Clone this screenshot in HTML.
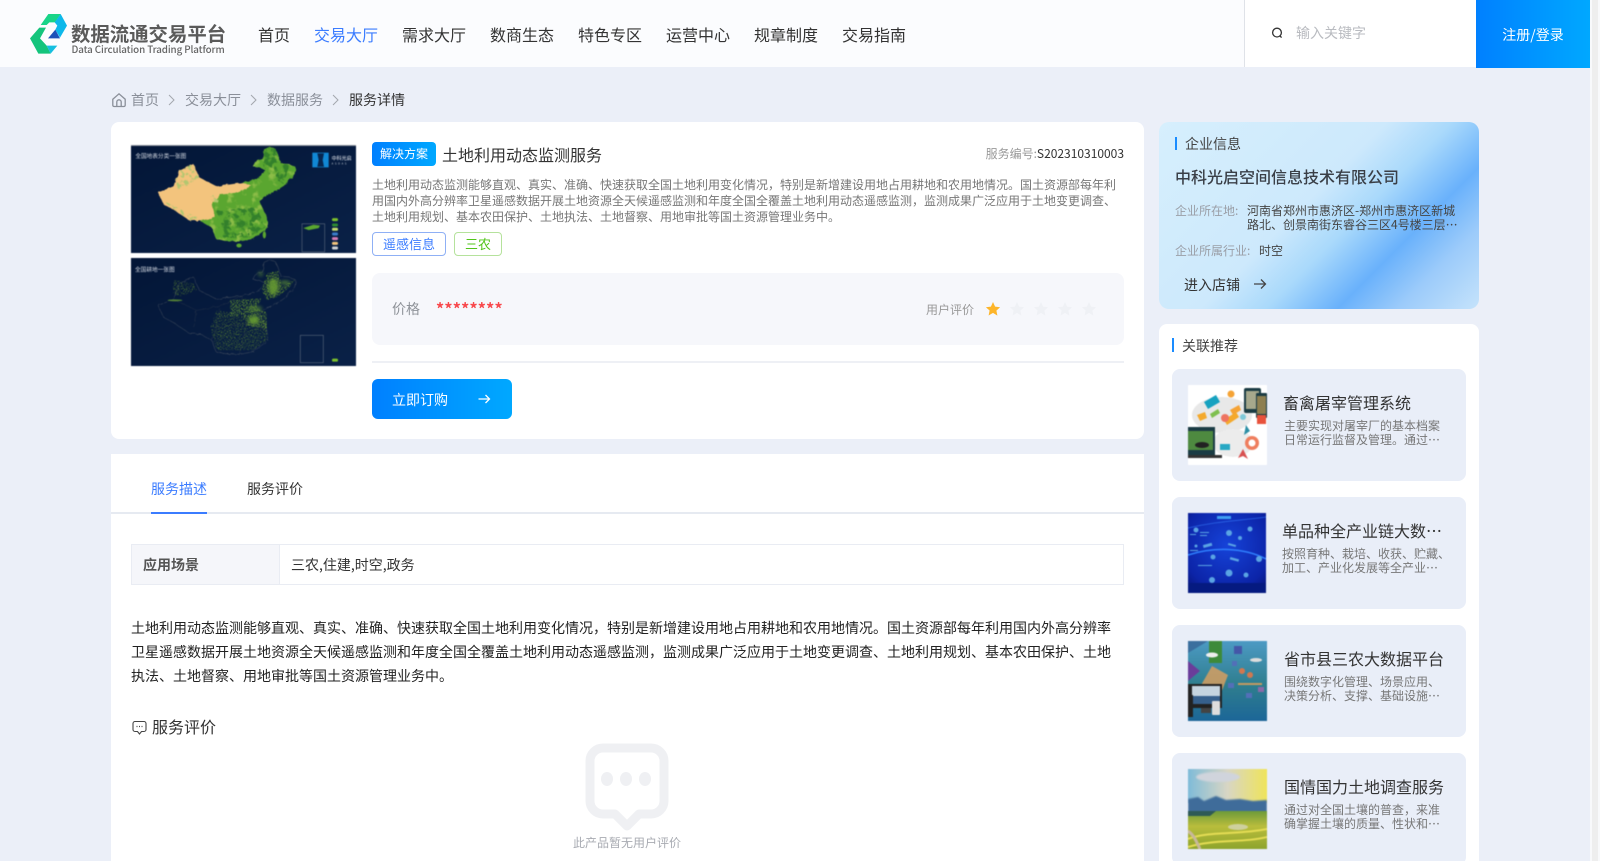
<!DOCTYPE html>
<html lang="zh"><head><meta charset="utf-8"><title>服务详情</title>
<style>
*{margin:0;padding:0;box-sizing:border-box}
html,body{width:1600px;height:861px;overflow:hidden}
body{position:relative;background:#ebeff8;font-family:"Noto Sans CJK SC","Liberation Sans",sans-serif;color:#333}
.a{position:absolute}
.t{position:absolute;white-space:nowrap;line-height:20px}
.nav{font-size:16px;color:#333;top:24px}
.bc{font-size:14px;color:#8a8f99;top:90px}
.d{font-size:12px;color:#777;left:372px;line-height:16px}
.p{font-size:14px;color:#222;left:131px;line-height:24px}
.item{position:absolute;left:1172px;width:294px;height:112px;background:#e9eef8;border-radius:8px}
.tt{font-size:16px;color:#333}
.ds{font-size:12px;color:#777;line-height:14px}
.th{filter:blur(.4px);overflow:hidden}
filter,filter *{color-interpolation-filters:sRGB}
</style></head><body>

<!-- header -->
<div class="a" style="left:0;top:0;width:1590px;height:67px;background:#fbfcfe"></div>
<svg class="a" style="left:20px;top:5px" width="60" height="60" viewBox="0 0 180 180">
<polygon points="62,60 85,27 122,27 105,52 88,52 80,60" fill="#18d488"/>
<polygon points="122,27 141,62 120,98 106,74 112,62 104,52" fill="#0db8ea"/>
<polygon points="106,74 120,100 84,100" fill="#1d51b8"/>
<polygon points="30,100 58,68 78,68 60,100 80,122 92,146 55,146" fill="#14c47c"/>
<polygon points="80,122 112,122 92,146" fill="#15bfe0"/>
</svg>
<div class="t" style="left:71px;top:21px;font-size:19.4px;font-weight:700;color:#5a5a5a;line-height:24px">数据流通交易平台</div>
<div class="t" style="left:71.500px;top:41px;font-size:9.8px;font-weight:500;color:#666;letter-spacing:-.1px;line-height:16px">Data Circulation Trading Platform</div>
<div class="t nav" style="left:258px">首页</div>
<div class="t nav" style="left:314px;color:#3b7cff">交易大厅</div>
<div class="t nav" style="left:402px">需求大厅</div>
<div class="t nav" style="left:490px">数商生态</div>
<div class="t nav" style="left:578px">特色专区</div>
<div class="t nav" style="left:666px">运营中心</div>
<div class="t nav" style="left:754px">规章制度</div>
<div class="t nav" style="left:842px">交易指南</div>
<div class="a" style="left:1244px;top:0;width:232px;height:67px;background:#fff;border-left:1px solid #dfe2e8"></div>
<svg class="a" style="left:1270px;top:26px" width="14" height="14" viewBox="0 0 14 14" fill="none" stroke="#333" stroke-width="1.3"><circle cx="7" cy="6.6" r="4.4"/><path d="M10 10l1.6 1.6"/></svg>
<div class="t" style="left:1296px;top:23px;font-size:14px;color:#b9bbc0">输入关键字</div>
<div class="a" style="left:1476px;top:0;width:114px;height:68px;background:linear-gradient(90deg,#0080ff,#00a8ff)"></div>
<div class="t" style="left:1476px;width:114px;text-align:center;top:25px;font-size:14px;color:#fff">注册/登录</div>
<div class="a" style="left:1590px;top:0;width:10px;height:861px;background:#f8f9fb"></div>
<div class="a" style="left:1592px;top:0;width:6px;height:861px;background:#eeeeee"></div>

<!-- breadcrumb -->
<svg class="a" style="left:111px;top:92px" width="16" height="16" viewBox="0 0 16 16" fill="none" stroke="#8a8f99" stroke-width="1.3"><path d="M1.800 7.200L8 1.800l6.200 5.400v6a1.300 1.300 0 0 1-1.300 1.300H3.100a1.300 1.300 0 0 1-1.300-1.300z"/><path d="M5.800 14.300V10a2.200 2.200 0 0 1 4.400 0v4.300"/></svg>
<div class="t bc" style="left:131px">首页</div>
<svg class="a" style="left:167px;top:93px" width="9" height="14" viewBox="0 0 9 14" fill="none" stroke="#a3a7ae" stroke-width="1"><path d="M2 2l5 5-5 5"/></svg>
<div class="t bc" style="left:185px">交易大厅</div>
<svg class="a" style="left:249px;top:93px" width="9" height="14" viewBox="0 0 9 14" fill="none" stroke="#a3a7ae" stroke-width="1"><path d="M2 2l5 5-5 5"/></svg>
<div class="t bc" style="left:267px">数据服务</div>
<svg class="a" style="left:331px;top:93px" width="9" height="14" viewBox="0 0 9 14" fill="none" stroke="#a3a7ae" stroke-width="1"><path d="M2 2l5 5-5 5"/></svg>
<div class="t bc" style="left:349px;color:#333">服务详情</div>

<!-- main card -->
<div class="a" style="left:111px;top:122px;width:1033px;height:317px;background:#fff;border-radius:8px"></div>
<svg class="a th" style="left:131px;top:144.500px" width="225" height="108.500" viewBox="63 73 675 325" preserveAspectRatio="none">
<defs>
<filter id="rough" x="-5%" y="-5%" width="110%" height="110%"><feTurbulence type="fractalNoise" baseFrequency=".07" numOctaves="3" seed="4"/><feDisplacementMap in="SourceGraphic" scale="8"/></filter>
<filter id="tex" x="0" y="0" width="100%" height="100%"><feTurbulence type="fractalNoise" baseFrequency=".04" numOctaves="4" seed="3" result="n"/><feColorMatrix in="n" type="matrix" values="0 0 0 0 .55  0 0 0 0 .74  0 0 0 0 .28  0 0 0 5 -2.700" result="sp"/><feComposite in="sp" in2="SourceAlpha" operator="in" result="c"/><feMerge><feMergeNode in="SourceGraphic"/><feMergeNode in="c"/></feMerge></filter>
<filter id="tex2" x="0" y="0" width="100%" height="100%"><feTurbulence type="fractalNoise" baseFrequency=".05" numOctaves="4" seed="9" result="n"/><feColorMatrix in="n" type="matrix" values="0 0 0 0 .2  0 0 0 0 .5  0 0 0 0 .17  0 0 0 7 -3.200" result="sp"/><feComposite in="sp" in2="SourceAlpha" operator="in"/></filter>
<filter id="tex3" x="0" y="0" width="100%" height="100%"><feTurbulence type="fractalNoise" baseFrequency=".09" numOctaves="3" seed="6" result="n"/><feColorMatrix in="n" type="matrix" values="0 0 0 0 .7  0 0 0 0 .78  0 0 0 0 .44  0 0 0 8 -4.100" result="sp"/><feComposite in="sp" in2="SourceAlpha" operator="in"/></filter>
<filter id="speck" x="0" y="0" width="100%" height="100%"><feTurbulence type="fractalNoise" baseFrequency=".3" numOctaves="2" seed="5" result="n"/><feColorMatrix in="n" type="matrix" values="0 0 0 0 .42  0 0 0 0 .62  0 0 0 0 .18  0 0 0 8 -4.100" result="sp"/><feComposite in="sp" in2="SourceAlpha" operator="in"/></filter>
<filter id="speck2" x="0" y="0" width="100%" height="100%"><feTurbulence type="fractalNoise" baseFrequency=".35" numOctaves="2" seed="8" result="n"/><feColorMatrix in="n" type="matrix" values="0 0 0 0 .34  0 0 0 0 .5  0 0 0 0 .18  0 0 0 10 -5.700" result="sp"/><feComposite in="sp" in2="SourceAlpha" operator="in"/></filter>
<filter id="b5"><feGaussianBlur stdDeviation="5"/></filter>
<linearGradient id="sea" x1="0" y1="0" x2="1" y2="1"><stop offset="0" stop-color="#031637"/><stop offset="1" stop-color="#0a2147"/></linearGradient></defs>
<rect x="63" y="73" width="675" height="325" fill="url(#sea)"/>
<rect x="63" y="73" width="675" height="3" fill="#8a8f99"/>
<g filter="url(#rough)">
<path filter="url(#tex)" fill="#5aa630" d="M395 186L440 175L468 150L452 142L430 138L440 120L458 115L462 86L480 78L498 86L512 128L537 130L558 140L554 160L522 195L490 215L470 222L447 240L472 290L474 320L452 337L430 354L390 362L345 360L318 354L305 320L270 300L300 260L310 225L350 215z"/>
<path filter="url(#tex2)" fill="#000" d="M462 86L480 78L498 86L512 128L540 135L520 190L480 165L460 140zM320 270L440 260L465 320L420 350L330 350z"/>
<path fill="#f3c47d" d="M145 215L190 197L208 150L250 130L268 170L320 197L395 186L425 195L385 215L330 222L305 250L315 290L280 298L240 300L198 272L160 250z"/>
<path filter="url(#tex3)" fill="#000" d="M190 197L208 150L250 130L268 170L240 190L200 205zM160 240L220 270L280 298L240 300L198 272zM300 230L330 220L320 260z"/>
</g>
<ellipse cx="387" cy="374" rx="8" ry="6" fill="#5aa630"/><ellipse cx="463" cy="342" rx="5" ry="11" fill="#5aa630"/>
<rect x="576" y="309" width="68" height="84" fill="none" stroke="#6a7686" stroke-width="1.500"/><path d="M580 322l30-10 20 2-4 8-30 6z" fill="#5aa630"/>
<g><rect x="666" y="292" width="18" height="9" rx="4" fill="#7cc02c"/><rect x="666" y="308" width="18" height="9" rx="4" fill="#2d8a32"/><rect x="666" y="321" width="18" height="9" rx="4" fill="#c6de6c"/><rect x="666" y="335" width="18" height="9" rx="4" fill="#3a7cc8"/><rect x="666" y="349" width="18" height="9" rx="4" fill="#d57cb4"/><rect x="666" y="363" width="18" height="9" rx="4" fill="#f3c47d"/><rect x="666" y="377" width="18" height="9" rx="4" fill="#cfd2d5"/></g>
<text x="76" y="112" font-size="17" fill="#d8dde6" font-family="Noto Sans CJK SC">全国地表分类一张图</text>
<rect x="607" y="96" width="49" height="44" fill="#1188d4"/><path d="M622 98h20l-4 20 4 20h-20l4-20z" fill="#07264f"/>
<text x="665" y="118" font-size="15" fill="#e8ecf2" font-family="Noto Sans CJK SC">中科光启</text>
<text x="665" y="132" font-size="8" fill="#c8d0d8" letter-spacing="5">ASDAS</text>
</svg>
<svg class="a th" style="left:131px;top:258px" width="225" height="108" viewBox="63 414 675 324" preserveAspectRatio="none">
<rect x="63" y="414" width="675" height="324" fill="url(#sea)"/>
<g filter="url(#rough)" transform="translate(0 341)">
<path fill="none" stroke="#4d5663" stroke-width="1.300" d="M145 215L190 197L208 150L250 130L268 170L320 197L395 186L440 175L468 150L452 142L430 138L440 120L458 115L462 86L480 78L498 86L512 128L537 130L558 140L554 160L522 195L490 215L470 222L447 240L472 290L474 320L452 337L430 354L390 362L345 360L318 354L305 320L270 300L240 300L198 272L160 250z"/>
<path fill="none" stroke="#2f3a4c" stroke-width="1" d="M190 197L260 230L250 280M260 230L330 218L395 186M330 218L320 280L305 320M320 280L410 270L470 290M395 186L410 270L390 360"/>
</g>
<g filter="url(#b5)" fill="#6fa832"><ellipse cx="490" cy="500" rx="16" ry="26" opacity=".8"/><ellipse cx="525" cy="488" rx="16" ry="6" opacity=".6"/><ellipse cx="432" cy="600" rx="16" ry="14" opacity=".85"/><ellipse cx="435" cy="566" rx="22" ry="9" opacity=".5"/><ellipse cx="452" cy="462" rx="8" ry="8" opacity=".4"/></g>
<ellipse cx="195" cy="541" rx="22" ry="3" fill="#6fa832" opacity=".7"/>
<path filter="url(#speck)" d="M470 460L505 452L515 500L555 478L540 500L505 530L470 540L455 510zM420 560L470 575L470 625L415 618L400 585zM360 540L455 535L430 580L360 590z" fill="#000"/>
<path filter="url(#speck2)" d="M320 570L470 600L472 660L430 690L320 690L300 620zM190 480L250 490L260 510L210 530L190 520z" fill="#000"/>
<rect x="571" y="646" width="69" height="82" fill="none" stroke="#6a7686" stroke-width="1.500"/>
<rect x="666" y="716" width="18" height="9" rx="4" fill="#7cc02c"/>
<text x="75" y="454" font-size="17" fill="#d8dde6" font-family="Noto Sans CJK SC">全国耕地一张图</text>
</svg>

<div class="a" style="left:372px;top:142px;width:64px;height:24px;border-radius:4px;background:linear-gradient(90deg,#0080ff,#00a8ff);color:#fff;font-size:12px;line-height:24px;text-align:center">解决方案</div>
<div class="t" style="left:442px;top:144px;font-size:16px;color:#333">土地利用动态监测服务</div>
<div class="t" style="right:476px;top:144px;font-size:12px;color:#999">服务编号:<span style="color:#333">S202310310003</span></div>
<div class="t d" style="top:177px">土地利用动态监测能够直观、真实、准确、快速获取全国土地利用变化情况，特别是新增建设用地占用耕地和农用地情况。国土资源部每年利</div>
<div class="t d" style="top:193px">用国内外高分辨率卫星遥感数据开展土地资源全天候遥感监测和年度全国全覆盖土地利用动态遥感监测，监测成果广泛应用于土地变更调查、</div>
<div class="t d" style="top:209px">土地利用规划、基本农田保护、土地执法、土地督察、用地审批等国土资源管理业务中。</div>
<div class="a" style="left:372px;top:232px;width:74px;height:24px;border:1px solid #8fb0f5;border-radius:4px;color:#3b7cff;font-size:13px;line-height:22px;text-align:center">遥感信息</div>
<div class="a" style="left:454px;top:232px;width:48px;height:24px;border:1px solid #b5e29c;border-radius:4px;color:#52c41a;font-size:13px;line-height:22px;text-align:center">三农</div>
<div class="a" style="left:372px;top:273px;width:752px;height:72px;background:#f6f7fb;border-radius:8px"></div>
<div class="t" style="left:392px;top:299px;font-size:14px;color:#8f9399">价格</div>
<div class="t" style="left:436px;top:298px;font-size:16px;font-weight:700;color:#f8484c;line-height:20px;letter-spacing:.25px">********</div>
<div class="t" style="left:926px;top:300px;font-size:12px;color:#999">用户评价</div>
<svg class="a" style="left:985px;top:301px" width="120" height="16" viewBox="0 0 120 16">
<defs><path id="s" d="M8 1l2.100 4.600 5 .6-3.700 3.400 1 5L8 11.900 3.600 14.500l1-5L.9 6.200l5-.6z"/></defs>
<use href="#s" fill="#fdb52a"/><use href="#s" x="24" fill="#eff1f5"/><use href="#s" x="48" fill="#eff1f5"/><use href="#s" x="72" fill="#eff1f5"/><use href="#s" x="96" fill="#eff1f5"/></svg>
<div class="a" style="left:372px;top:361px;width:752px;height:2px;background:#eef0f5"></div>
<div class="a" style="left:372px;top:379px;width:140px;height:40px;border-radius:6px;background:linear-gradient(90deg,#0080ff,#00a8ff)"></div>
<div class="t" style="left:392px;top:390px;font-size:14px;color:#fff">立即订购</div>
<svg class="a" style="left:477px;top:392px" width="14" height="14" viewBox="0 0 14 14" fill="none" stroke="#fff" stroke-width="1.300"><path d="M1.500 7h11M8.500 3l4 4-4 4"/></svg>

<!-- tabs card -->
<div class="a" style="left:111px;top:454px;width:1033px;height:407px;background:#fff"></div>
<div class="a" style="left:111px;top:512px;width:1033px;height:2px;background:#e6eaf1"></div>
<div class="a" style="left:151px;top:512px;width:56px;height:2px;background:#3b7cff"></div>
<div class="t" style="left:151px;top:479px;font-size:14px;color:#3b7cff">服务描述</div>
<div class="t" style="left:247px;top:479px;font-size:14px;color:#333">服务评价</div>
<div class="a" style="left:131px;top:544px;width:993px;height:41px;border:1px solid #e9ecf3"></div>
<div class="a" style="left:131px;top:544px;width:149px;height:41px;background:#f5f6fa;border:1px solid #e9ecf3"></div>
<div class="t" style="left:143px;top:555px;font-size:14px;font-weight:700;color:#555">应用场景</div>
<div class="t" style="left:291px;top:555px;font-size:14px;color:#333">三农,住建,时空,政务</div>
<div class="t p" style="top:616px">土地利用动态监测能够直观、真实、准确、快速获取全国土地利用变化情况，特别是新增建设用地占用耕地和农用地情况。国土资源部每年利用国内外高分辨率</div>
<div class="t p" style="top:640px">卫星遥感数据开展土地资源全天候遥感监测和年度全国全覆盖土地利用动态遥感监测，监测成果广泛应用于土地变更调查、土地利用规划、基本农田保护、土地</div>
<div class="t p" style="top:664px">执法、土地督察、用地审批等国土资源管理业务中。</div>
<svg class="a" style="left:132px;top:720px" width="15" height="16" viewBox="0 0 15 16" fill="none" stroke="#444" stroke-width="1.100"><path d="M3 1.500h9a2 2 0 0 1 2 2v6a2 2 0 0 1-2 2h-2.500L7.500 14l-2-2.500H3a2 2 0 0 1-2-2v-6a2 2 0 0 1 2-2z"/><path d="M4.500 6.500h1M7 6.500h1M9.500 6.500h1" stroke-width="1.300"/></svg>
<div class="t" style="left:152px;top:716px;font-size:16px;color:#333">服务评价</div>
<svg class="a" style="left:585px;top:743px" width="84" height="88" viewBox="0 0 84 88">
<path d="M18 5h48a13 13 0 0 1 13 13v40a13 13 0 0 1-13 13H54L42 83 30 71H18A13 13 0 0 1 5 58V18A13 13 0 0 1 18 5z" fill="none" stroke="#eff0f3" stroke-width="9" stroke-linejoin="round"/>
<ellipse cx="22" cy="36" rx="6" ry="7" fill="#eff0f3"/><ellipse cx="41" cy="36" rx="6" ry="7" fill="#eff0f3"/><ellipse cx="60" cy="36" rx="6" ry="7" fill="#eff0f3"/></svg>
<div class="t" style="left:573px;top:833px;font-size:12px;color:#a8abb2">此产品暂无用户评价</div>

<!-- company card -->
<div class="a" style="left:1159px;top:122px;width:320px;height:187px;border-radius:10px;background:linear-gradient(135deg,#d6effd 0%,#cde9fc 45%,#a9d9fb 58%,#69b1fb 72%,#9ccbfa 84%,#c5e3fb 100%)"></div>
<div class="a" style="left:1175px;top:137px;width:2px;height:13px;background:#1a8cff"></div>
<div class="t" style="left:1185px;top:134px;font-size:14px;color:#444">企业信息</div>
<div class="t" style="left:1175px;top:165px;font-size:16px;font-weight:500;color:#3a3f47;line-height:22px">中科光启空间信息技术有限公司</div>
<div class="t" style="left:1175px;top:201px;font-size:12px;color:#9a9ea6">企业所在地:</div>
<div class="t" style="left:1247px;top:204px;font-size:12px;color:#444;line-height:14px">河南省郑州市惠济区-郑州市惠济区新城<br>路北、创景南街东睿谷三区4号楼三层…</div>
<div class="t" style="left:1175px;top:241px;font-size:12px;color:#9a9ea6">企业所属行业:</div>
<div class="t" style="left:1259px;top:241px;font-size:12px;color:#444">时空</div>
<div class="t" style="left:1184px;top:275px;font-size:14px;color:#333">进入店铺</div>
<svg class="a" style="left:1253px;top:277px" width="14" height="14" viewBox="0 0 14 14" fill="none" stroke="#444" stroke-width="1.300"><path d="M1 7h11.500M8 2.500L12.500 7 8 11.500"/></svg>

<!-- related -->
<div class="a" style="left:1159px;top:324px;width:320px;height:537px;background:#fff;border-radius:8px 8px 0 0"></div>
<div class="a" style="left:1172px;top:338px;width:2px;height:14px;background:#1a8cff"></div>
<div class="t" style="left:1182px;top:336px;font-size:14px;color:#444">关联推荐</div>

<div class="item" style="top:369px"></div>
<svg class="a th" style="left:1188px;top:385px" width="79" height="80" viewBox="0 0 79 80">
<rect width="79" height="80" fill="#fff"/><ellipse cx="34" cy="30" rx="30" ry="18" fill="#e8e8e8"/><ellipse cx="45" cy="58" rx="20" ry="14" fill="#ececec"/>
<rect x="56" y="3" width="17" height="25" rx="2" fill="#1b3c44"/><rect x="58" y="6" width="13" height="18" fill="#a6a88c"/>
<rect x="68" y="8" width="11" height="25" rx="1" fill="#1b3c44"/><rect x="69" y="11" width="9" height="18" fill="#8e7f50"/>
<rect x="0" y="42" width="27" height="28" fill="#1b3c44"/><rect x="0" y="46" width="25" height="19" fill="#4e8a40"/><rect x="0" y="70" width="34" height="3" fill="#333"/>
<ellipse cx="14" cy="60" rx="7" ry="3" fill="#222"/>
<path d="M16 17l12-7 4 7-12 7z" fill="#16a2c0"/><circle cx="43" cy="9" r="3.500" fill="#f5a335"/><path d="M9 30l8-3 2 6-7 3z" fill="#f4a92c"/><path d="M22 29l8-5 2 4-8 5z" fill="#7fc04f"/><path d="M42 25l9-5 2 5-8 5z" fill="#f5a335"/><path d="M36 35l12-8 3 5-12 8z" fill="#f4a92c"/><circle cx="37" cy="33" r="4" fill="#ee7360"/><circle cx="55" cy="32" r="3" fill="#7ec8d8"/><circle cx="64" cy="58" r="7" fill="#ef7e5e"/><circle cx="64" cy="58" r="3.500" fill="#fff"/><path d="M69 30h9v9h-9z" fill="#e8523c"/><path d="M50 73l5-9 5 10-5-3z" fill="#d85050"/><path d="M32 59h10v6H32z" fill="#28a8c4"/><path d="M58 40l4 6-6 4z" fill="#2d8fa5"/>
</svg>
<div class="t tt" style="left:1283px;top:392px">畜禽屠宰管理系统</div>
<div class="t ds" style="left:1284px;top:419px">主要实现对屠宰厂的基本档案<br>日常运行监督及管理。通过…</div>

<div class="item" style="top:497px"></div>
<svg class="a th" style="left:1188px;top:513px" width="78" height="80" viewBox="0 0 78 80">
<defs><radialGradient id="bl" cx=".5" cy=".4" r=".8"><stop offset="0" stop-color="#1643d9"/><stop offset=".7" stop-color="#0c24a8"/><stop offset="1" stop-color="#06116c"/></radialGradient></defs>
<rect width="78" height="80" fill="url(#bl)"/>
<path d="M0 42C25 34 55 34 78 46" stroke="#2f80ff" stroke-width="1.500" fill="none"/><path d="M0 15C30 8 50 8 78 4" stroke="#2a63e6" stroke-width=".8" fill="none"/>
<rect x="0" y="70" width="78" height="10" fill="#051a80"/>
<g fill="#5aa4e4"><circle cx="8" cy="17" r="2.500"/><rect x="2" y="21" width="6" height="1"/><rect x="12" y="19" width="9" height="1"/><rect x="12" y="22" width="7" height="1"/><circle cx="41" cy="20" r="3"/><circle cx="62" cy="16" r="2.500"/><circle cx="52" cy="25" r="2"/><rect x="15" y="31" width="9" height="3" transform="rotate(-15 19 32)"/><rect x="40" y="31" width="8" height="2" transform="rotate(15 44 32)"/><circle cx="25" cy="44" r="2.500"/><rect x="42" y="45" width="9" height="2.500" transform="rotate(15 46 46)"/><circle cx="71" cy="46" r="3"/><rect x="10" y="52" width="14" height="1"/><circle cx="41" cy="60" r="3.500"/><circle cx="24" cy="67" r="3"/><circle cx="58" cy="62" r="2.500"/><circle cx="8" cy="33" r="1.500"/><rect x="2" y="37" width="8" height="1"/></g>
<rect x="29" y="3" width="14" height="3" fill="#3f9ef2"/>
</svg>
<div class="t tt" style="left:1282px;top:520px">单品种全产业链大数…</div>
<div class="t ds" style="left:1282px;top:547px">按照育种、栽培、收获、贮藏、<br>加工、产业化发展等全产业…</div>

<div class="item" style="top:625px"></div>
<svg class="a th" style="left:1188px;top:641px" width="79" height="80" viewBox="0 0 79 80">
<defs><linearGradient id="c3" x1="0" y1="0" x2="0" y2="1"><stop offset="0" stop-color="#4c9ac4"/><stop offset=".55" stop-color="#2f7e8e"/><stop offset="1" stop-color="#1c6698"/></linearGradient></defs>
<rect width="79" height="80" fill="url(#c3)"/><path d="M0 0h20L0 12z" fill="#3b6f9e"/><rect x="21" width="13" height="22" fill="#3d8a3a"/><path d="M0 40L12 30 0 20z" fill="#6a3d9a"/>
<path d="M24 25L40 34 30 60 12 46z" fill="#e0a05c" opacity=".8"/>
<path d="M0 43h34v24H0z" fill="#222"/><path d="M4 45h28v18H4z" fill="#c5d4df"/><path d="M4 55h28v8H4z" fill="#36608c"/><path d="M13 67h10v5H13z" fill="#444"/>
<rect x="0" y="54" width="5" height="22" fill="#222"/><rect x="24" y="60" width="8" height="14" rx="1" fill="#ddd"/>
<rect x="46" y="5" width="8" height="8" fill="#4457a8"/><rect x="44" y="20" width="5" height="5" fill="#536fb8"/><circle cx="54" cy="30" r="3" fill="#d07850"/><circle cx="62" cy="34" r="3" fill="#d07850"/><rect x="40" y="42" width="6" height="5" fill="#536fb8"/><rect x="58" y="52" width="6" height="5" fill="#536fb8"/><rect x="50" y="42" width="24" height="2" fill="#c69a60"/><rect x="70" y="46" width="6" height="5" fill="#8a6aa8"/>
<ellipse cx="24" cy="14" rx="6" ry="2.500" fill="#eee"/><ellipse cx="68" cy="19" rx="6" ry="2" fill="#ddd"/>
</svg>
<div class="t tt" style="left:1284px;top:648px">省市县三农大数据平台</div>
<div class="t ds" style="left:1284px;top:675px">围绕数字化管理、场景应用、<br>决策分析、支撑、基础设施…</div>

<div class="item" style="top:753px"></div>
<svg class="a th" style="left:1188px;top:769px" width="79" height="80" viewBox="0 0 79 80">
<defs><linearGradient id="c4" x1="0" y1="0" x2="1" y2="0"><stop offset="0" stop-color="#7fbbd8"/><stop offset=".5" stop-color="#d8d6c4"/><stop offset="1" stop-color="#efe45a"/></linearGradient><linearGradient id="c5" x1="0" y1="0" x2="0" y2="1"><stop offset="0" stop-color="#6d9a3a"/><stop offset=".4" stop-color="#b9bd3c"/><stop offset="1" stop-color="#8ea42c"/></linearGradient><filter id="b4"><feGaussianBlur stdDeviation=".8"/></filter></defs>
<rect width="79" height="34" fill="url(#c4)"/><ellipse cx="30" cy="8" rx="22" ry="5" fill="#d0d4dc" filter="url(#b4)"/>
<path filter="url(#b4)" d="M0 30L10 28 16 32 28 27 38 31 52 30 65 32 79 31V46H0z" fill="#3f6c9a"/>
<rect y="42" width="79" height="38" fill="url(#c5)"/><path d="M0 42h28l-6 5H0z" fill="#2e5a56"/><ellipse cx="50" cy="58" rx="10" ry="3" fill="#d8d8c8" opacity=".7"/><path d="M0 70C20 62 50 66 79 60M0 78C25 70 55 74 79 68" stroke="#e4dc54" stroke-width="2" fill="none"/><path d="M0 62C6 66 8 72 12 80" stroke="#c8b89a" stroke-width="3" fill="none"/>
</svg>
<div class="t tt" style="left:1284px;top:776px">国情国力土地调查服务</div>
<div class="t ds" style="left:1284px;top:803px">通过对全国土壤的普查，来准<br>确掌握土壤的质量、性状和…</div>
</body></html>
